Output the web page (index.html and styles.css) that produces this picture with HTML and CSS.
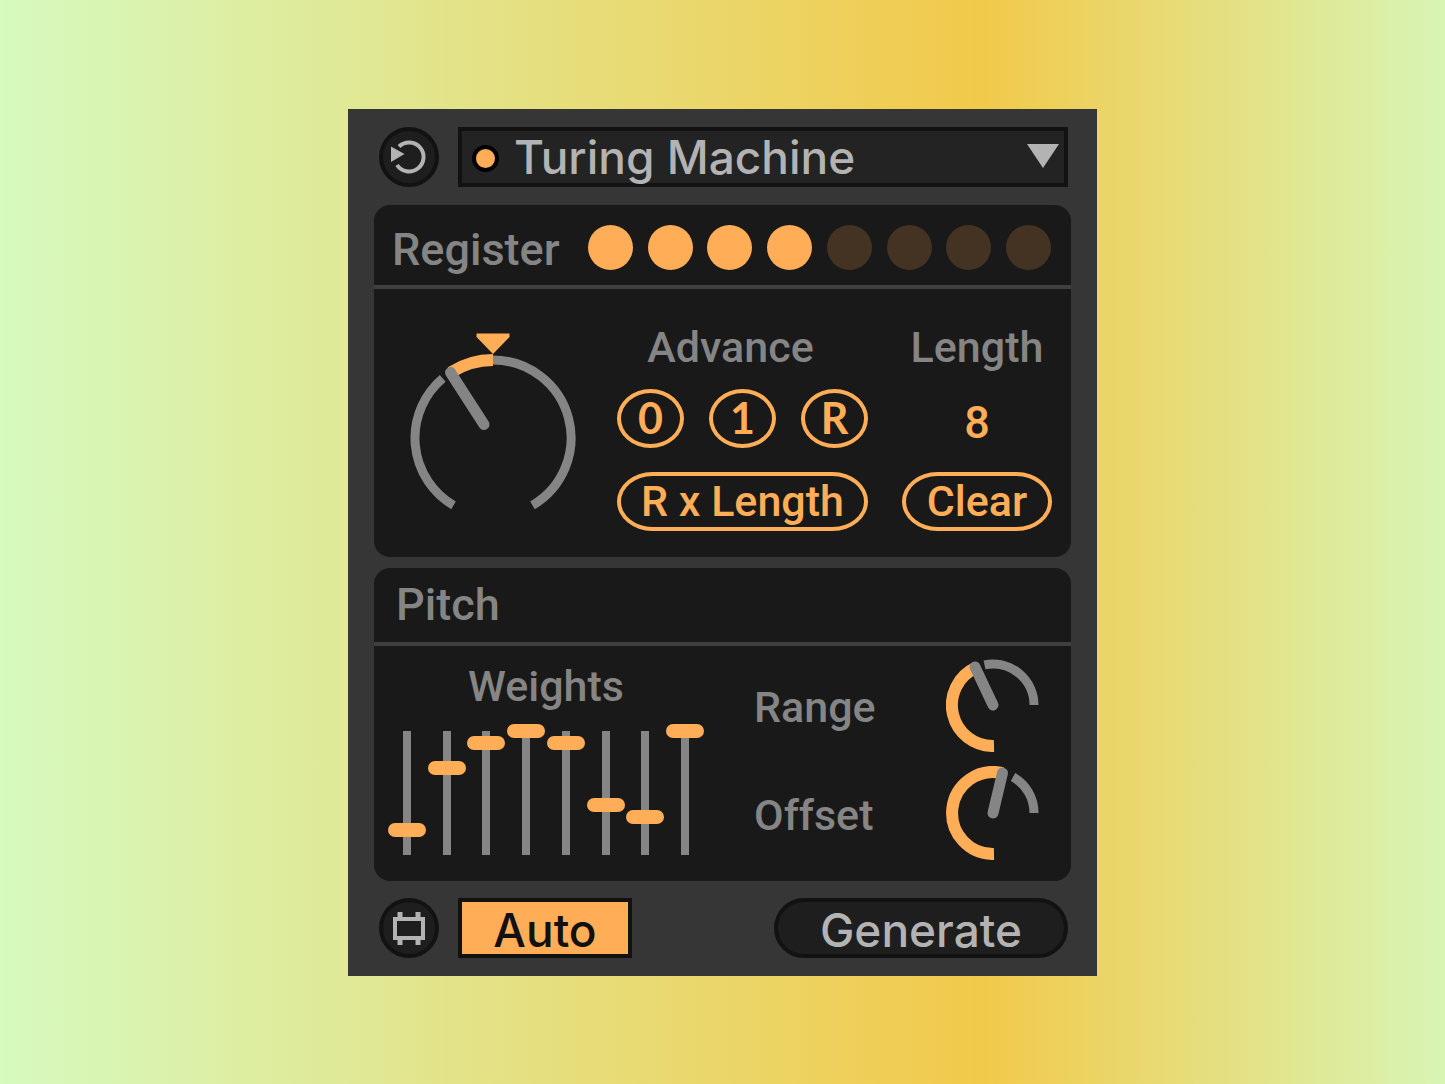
FILE: index.html
```html
<!DOCTYPE html>
<html lang="en">

<head>
    <meta charset="UTF-8">
    <meta name="viewport" content="width=device-width, initial-scale=1.0">
    <title>Turing Machine</title>
    <link rel="stylesheet" href="styles.css">
</head>

<body>
    <main class="device">
        <header class="bar">
            <button class="round" type="button" aria-label="Reset">
                <svg viewBox="0 0 60 60" width="60" height="60">
                    <path d="M18 38 A14.5 14.5 0 1 0 20 19.5" fill="none" stroke="#b3b3b3" stroke-width="4" />
                    <path d="M12 19.5 L25.5 27 L12 35 Z" fill="#b3b3b3" />
                </svg>
            </button>
            <div class="picker">
                <span class="led"></span>
                <select class="picker-select" aria-label="Generator">
                    <option>Turing Machine</option>
                </select>
                <svg class="picker-arrow" viewBox="0 0 32 24" width="32" height="24">
                    <path d="M0 0 H32 L16 24 Z" fill="#b3b3b3" />
                </svg>
            </div>
        </header>

        <section class="panel">
            <div class="panel-head register-head">
                <h2 class="label">Register</h2>
                <div class="bits">
                    <input class="bit" type="checkbox" aria-label="Bit 1" checked>
                    <input class="bit" type="checkbox" aria-label="Bit 2" checked>
                    <input class="bit" type="checkbox" aria-label="Bit 3" checked>
                    <input class="bit" type="checkbox" aria-label="Bit 4" checked>
                    <input class="bit" type="checkbox" aria-label="Bit 5">
                    <input class="bit" type="checkbox" aria-label="Bit 6">
                    <input class="bit" type="checkbox" aria-label="Bit 7">
                    <input class="bit" type="checkbox" aria-label="Bit 8">
                </div>
            </div>
            <div class="register-body">
                <div class="knob knob-big">
                    <svg viewBox="-84 -105 168 180" width="168" height="180">
                        <g fill="none" stroke="#858585" stroke-width="9">
                            <path d="M-39.5 67.3 A78 78 0 0 1 -50.3 -59.6" />
                            <path d="M0 -78 A78 78 0 0 1 39.5 67.3" />
                        </g>
                        <path d="M0 -78 A78 78 0 0 0 -42 -65.7" fill="none" stroke="#ffad56" stroke-width="12" />
                        <path d="M-9 -13.5 L-42.5 -65.5" stroke="#858585" stroke-width="11" stroke-linecap="round" />
                        <path d="M-16.5 -104.5 H16.5 V-101 L0 -84 L-16.5 -101 Z" fill="#ffad56" />
                    </svg>
                    <input class="knob-input" type="range" aria-label="Probability" min="-100" max="100" value="-22">
                </div>
                <div class="group group-advance">
                    <h3 class="label">Advance</h3>
                    <div class="keys">
                        <button class="key" type="button">0</button>
                        <button class="key" type="button">1</button>
                        <button class="key" type="button">R</button>
                    </div>
                    <button class="pill" type="button">R x Length</button>
                </div>
                <div class="group group-length">
                    <label class="label" for="length">Length</label>
                    <input class="number" id="length" type="text" inputmode="numeric" value="8">
                    <button class="pill" type="button">Clear</button>
                </div>
            </div>
        </section>

        <section class="panel">
            <div class="panel-head pitch-head">
                <h2 class="label">Pitch</h2>
            </div>
            <div class="pitch-body">
                <div class="weights">
                    <h3 class="label">Weights</h3>
                    <div class="sliders">
                        <input class="slider" type="range" aria-label="Weight 1" min="0" max="10" value="2">
                        <input class="slider" type="range" aria-label="Weight 2" min="0" max="10" value="7">
                        <input class="slider" type="range" aria-label="Weight 3" min="0" max="10" value="9">
                        <input class="slider" type="range" aria-label="Weight 4" min="0" max="10" value="10">
                        <input class="slider" type="range" aria-label="Weight 5" min="0" max="10" value="9">
                        <input class="slider" type="range" aria-label="Weight 6" min="0" max="10" value="4">
                        <input class="slider" type="range" aria-label="Weight 7" min="0" max="10" value="3">
                        <input class="slider" type="range" aria-label="Weight 8" min="0" max="10" value="10">
                    </div>
                </div>
                <div class="dials">
                    <div class="dial">
                        <label class="label" for="range">Range</label>
                        <div class="knob">
                            <svg viewBox="-47 -47 94 94" width="94" height="94">
                                <path d="M-8.5 -40.1 A41 41 0 0 1 41 0" fill="none" stroke="#858585" stroke-width="9" />
                                <path d="M1 41 A41 41 0 0 1 -17.3 -37.2" fill="none" stroke="#ffad56" stroke-width="12" />
                                <path d="M0 0 L-18 -38" stroke="#858585" stroke-width="11" stroke-linecap="round" />
                            </svg>
                            <input class="knob-input" id="range" type="range" min="0" max="100" value="57">
                        </div>
                    </div>
                    <div class="dial">
                        <label class="label" for="offset">Offset</label>
                        <div class="knob">
                            <svg viewBox="-47 -47 94 94" width="94" height="94">
                                <path d="M20 -36 A41 41 0 0 1 41 0" fill="none" stroke="#858585" stroke-width="9" />
                                <path d="M1 41 A41 41 0 1 1 9.5 -39.9" fill="none" stroke="#ffad56" stroke-width="12" />
                                <path d="M0 0 L9.5 -40" stroke="#858585" stroke-width="11" stroke-linecap="round" />
                            </svg>
                            <input class="knob-input" id="offset" type="range" min="0" max="100" value="72">
                        </div>
                    </div>
                </div>
            </div>
        </section>

        <footer class="bar">
            <button class="round" type="button" aria-label="Clip">
                <svg viewBox="0 0 60 60" width="60" height="60">
                    <rect x="16" y="21" width="28" height="19" fill="none" stroke="#b3b3b3" stroke-width="4" />
                    <path d="M21 14 V20 M39 14 V20 M21 41 V47 M39 41 V47" stroke="#b3b3b3" stroke-width="5" />
                </svg>
            </button>
            <button class="auto" type="button" aria-pressed="true">Auto</button>
            <button class="generate" type="button">Generate</button>
        </footer>
    </main>
</body>

</html>
```

FILE: styles.css
```css
* {
    box-sizing: border-box;
}

body {
    margin: 0;
    min-height: 100vh;
    display: flex;
    align-items: center;
    justify-content: center;
    font-family: Inter, "Liberation Sans", sans-serif;
    background: linear-gradient(to right, #d6fabf 0%, #f2c94a 68%, #d8f5b4 100%);
}

button,
input,
select {
    font-family: inherit;
    margin: 0;
    padding: 0;
}

button {
    cursor: pointer;
}

svg {
    display: block;
}

.device {
    width: 100%;
    max-width: 749px;
    padding: 18px 26px;
    background: #363636;
}

/* top and bottom rows */
.bar {
    display: flex;
    align-items: center;
    padding: 0 3px 0 5px;
}

.round {
    width: 60px;
    height: 60px;
    border: 4px solid #121212;
    border-radius: 50%;
    background: #1e1e1e;
    display: flex;
    align-items: center;
    justify-content: center;
    flex: none;
}

.round svg {
    flex: none;
}

.picker {
    position: relative;
    flex: 1;
    margin-left: 19px;
}

.picker-select {
    appearance: none;
    display: block;
    width: 100%;
    height: 60px;
    padding: 0 50px 0 56px;
    border: none;
    border-radius: 0;
    box-shadow: inset 0 0 0 4px #121212;
    background: #232323;
    color: #b3b3b3;
    font-size: 46px;
    font-weight: 500;
}

.led {
    position: absolute;
    left: 14px;
    top: 18px;
    width: 27px;
    height: 27px;
    border: 4px solid #000;
    border-radius: 50%;
    background: #ffad56;
}

.picker-arrow {
    position: absolute;
    right: 9px;
    top: 17px;
    pointer-events: none;
}

/* panels */
.panel {
    margin-top: 11px;
    border-radius: 16px;
    background: #191919;
}

.bar + .panel {
    margin-top: 18px;
}

.panel-head {
    display: flex;
    align-items: center;
    border-bottom: 4px solid #3f3f3f;
}

.label {
    margin: 0;
    color: #858585;
    font-family: Roboto, "Liberation Sans", sans-serif;
    font-size: 43px;
    font-weight: 500;
    line-height: 48px;
}

.register-head {
    justify-content: space-between;
    height: 84px;
    padding: 6px 20px 0 18px;
}

.register-head .label {
    padding-top: 4px;
}

.pitch-head {
    height: 78px;
    padding: 0 22px;
}

.panel-head .label {
    font-size: 45px;
}

.bits {
    display: flex;
    justify-content: space-between;
    width: 463px;
}

.bit {
    appearance: none;
    width: 45px;
    height: 45px;
    border-radius: 50%;
    background: #443323;
}

.bit:checked {
    background: #ffad56;
}

.register-body {
    display: flex;
    padding: 34px 19px 26px 35px;
}

.knob {
    position: relative;
    flex: none;
}

.knob-big {
    padding-top: 10px;
}

/* the real control lies over the drawing */
.knob-input {
    position: absolute;
    inset: 0;
    width: 100%;
    height: 100%;
    opacity: 0;
    cursor: pointer;
}

.group {
    display: flex;
    flex-direction: column;
    align-items: center;
}

.group-advance {
    width: 251px;
    margin-left: auto;
}

.group-advance .label {
    padding-right: 24px;
}

.group-length {
    width: 150px;
    margin-left: 34px;
}

.keys {
    display: flex;
    justify-content: space-between;
    width: 100%;
    margin: 18px 0 24px;
}

.key,
.pill {
    height: 59px;
    border: 4px solid #ffad56;
    background: none;
    color: #ffad56;
    font-family: Roboto, "Liberation Sans", sans-serif;
    font-size: 43px;
    font-weight: 500;
    line-height: 48px;
}

.key {
    width: 67px;
    border-radius: 50%;
    font-family: Lato, Roboto, sans-serif;
    font-weight: 700;
}

.pill {
    width: 100%;
    border-radius: 36px / 30px;
}

.number {
    width: 100%;
    height: 59px;
    margin: 22px 0 20px;
    border: none;
    background: none;
    color: #ffad56;
    font-family: Roboto, "Liberation Sans", sans-serif;
    font-size: 45px;
    font-weight: 500;
    text-align: center;
}

.pitch-body {
    display: flex;
    justify-content: space-between;
    padding: 12px 31px 19px 14px;
}

.weights {
    display: flex;
    flex-direction: column;
    align-items: center;
    gap: 14px;
    padding-top: 4px;
}

.sliders {
    display: flex;
    justify-content: space-between;
    width: 316px;
}

.slider {
    appearance: none;
    writing-mode: vertical-lr;
    direction: rtl;
    width: 38px;
    height: 138px;
    background: linear-gradient(#858585, #858585) center / 8px 124px no-repeat;
    cursor: pointer;
}

.slider::-webkit-slider-thumb {
    appearance: none;
    width: 38px;
    height: 14px;
    border-radius: 7px;
    background: #ffad56;
}

.dials {
    display: flex;
    flex-direction: column;
    gap: 14px;
}

.dial {
    display: flex;
    align-items: center;
    justify-content: space-between;
    width: 286px;
}

.dial .label {
    padding-top: 4px;
}

.bar:last-child {
    margin-top: 17px;
}

.auto {
    width: 174px;
    height: 60px;
    margin-left: 19px;
    border: 4px solid #121212;
    background: #ffad56;
    color: #111;
    font-size: 46px;
    font-weight: 500;
}

.generate {
    width: 294px;
    height: 60px;
    margin-left: auto;
    border: 4px solid #121212;
    border-radius: 30px;
    background: #1e1e1e;
    color: #b3b3b3;
    font-size: 46px;
    font-weight: 500;
}
```
